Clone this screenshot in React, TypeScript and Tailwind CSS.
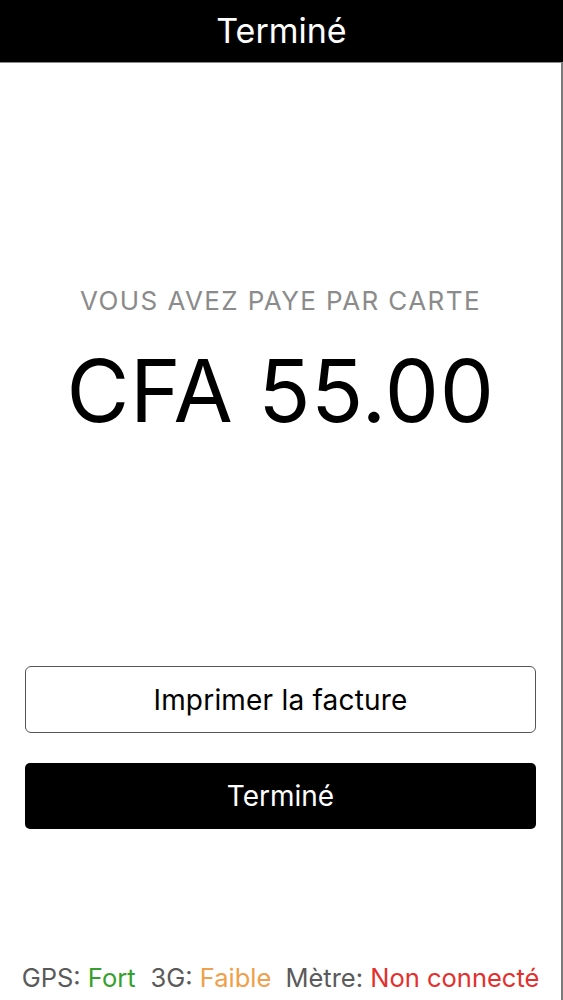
export default function App() {
  return (
    <div className="h-[1000px] w-full flex flex-col bg-white font-['Inter','Liberation_Sans',sans-serif]">
      <header className="h-[63px] shrink-0 bg-black border-b border-[#8a8a8a] flex items-center justify-center">
        <h1 className="text-white text-[34px] leading-none">Terminé</h1>
      </header>
      <div className="flex-1 flex flex-col border-r-2 border-[#7a7a7a]">
        <section className="pt-[222px] flex flex-col items-center">
          <p className="text-[#8b8b8b] text-[26px] leading-[31px] tracking-[1.4px]">VOUS AVEZ PAYE PAR CARTE</p>
          <p className="mt-[31px] text-black text-[86px] leading-[88px] tracking-[0.6px]">CFA 55.00</p>
        </section>
        <section className="mt-[231px] px-[25px] flex flex-col gap-[30px]">
          <button className="h-[67px] w-full rounded-[6px] border-[1.5px] border-[#555] bg-white text-black text-[28px] tracking-[0.2px]">
            Imprimer la facture
          </button>
          <button className="h-[66px] w-full rounded-[5px] bg-black text-white text-[28px]">
            Terminé
          </button>
        </section>
        <footer className="mt-auto pb-[7px] flex justify-center text-[25.5px] leading-[30px] text-[#5a5a5a]">
          <span>GPS: <span className="text-[#36a02c]">Fort</span></span>
          <span className="ml-[15px]">3G: <span className="text-[#f0a04a]">Faible</span></span>
          <span className="ml-[14px]">Mètre: <span className="text-[#e3302f]">Non connecté</span></span>
        </footer>
      </div>
    </div>
  );
}
